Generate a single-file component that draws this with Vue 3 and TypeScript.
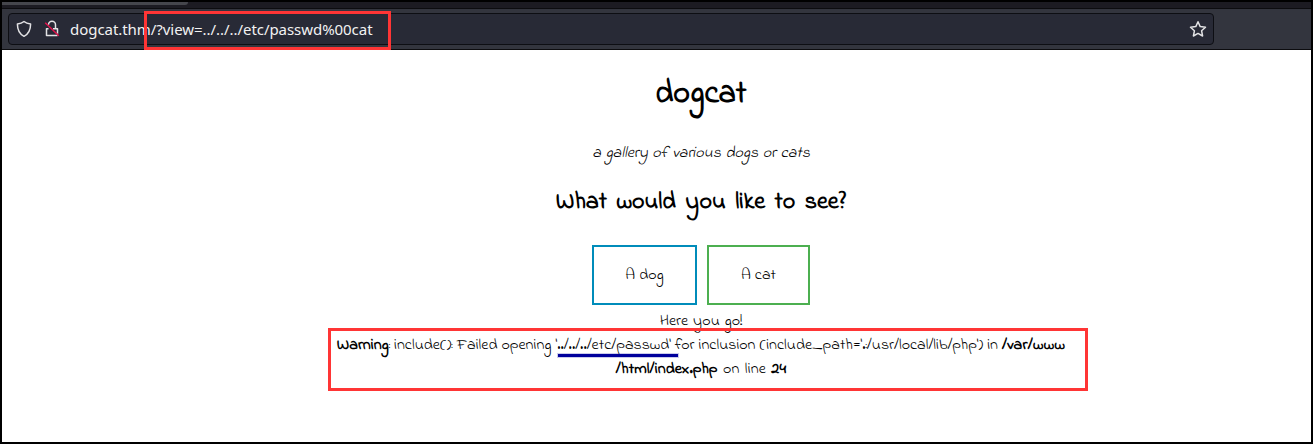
<script setup lang="ts">
interface Choice { label: string; kind: 'dog' | 'cat' }
const choices: Choice[] = [
  { label: 'A dog', kind: 'dog' },
  { label: 'A cat', kind: 'cat' },
]
</script>

<template>
  <div class="window">
    <div class="tabs"><div class="active-tab"></div></div>
    <header class="toolbar">
      <div class="urlbar">
        <svg class="shield" width="16" height="18" viewBox="0 0 16 18">
          <path d="M8 1.500C6.200 3 3.800 3.700 1.400 4c0 5.200 1.400 9.700 6.600 12.300C13.200 13.700 14.600 9.200 14.600 4 12.200 3.700 9.800 3 8 1.500Z" />
        </svg>
        <svg class="lock" width="16" height="18" viewBox="0 0 16 18">
          <path d="M4.500 4.800a3.500 3.500 0 0 1 7 0V8.500M4.500 8.800H2.500v6.700h11M9 8.800h4.500v5" />
          <path class="slash" d="M1.200 2.800 14.800 15.800" />
        </svg>
        <span class="host">dogcat.thm</span><span class="path">/?view=../../../etc/passwd%00cat</span>
        <svg class="star" width="18" height="18" viewBox="0 0 18 18">
          <path d="m9 1.700 2.200 4.900 5.300.6-3.900 3.600 1 5.200L9 13.400 4.400 16l1-5.200L1.500 7.200l5.300-.6Z" />
        </svg>
      </div>
    </header>
    <main class="page">
      <h1>dogcat</h1>
      <p class="tagline"><i>a gallery of various dogs or cats</i></p>
      <h2>What would you like to see?</h2>
      <div class="choices">
        <a v-for="c in choices" :key="c.kind" :class="['choice', c.kind]">{{ c.label }}</a>
      </div>
      <p class="go">Here you go!</p>
      <p class="warning"><b>Warning</b>: include(): Failed opening '../../../etc/passwd' for inclusion (include_path='.:/usr/local/lib/php') in <b>/var/www</b></p>
      <p class="source"><b>/html/index.php</b> on line <b>24</b></p>
    </main>
    <div class="mark url-mark"></div>
    <div class="mark warning-mark"></div>
    <div class="underline"></div>
  </div>
</template>

<style scoped>
.window {
  position: relative;
  box-sizing: border-box;
  width: 1313px;
  height: 444px;
  border: 2px solid #000;
  background: #fff;
  overflow: hidden;
}
.tabs { height: 7px; background: #1c1b22; border-bottom: 1px solid #0c0c0f; box-sizing: border-box; }
.active-tab { width: 186px; height: 3px; background: #45464c; border-bottom-right-radius: 3px; }
.toolbar {
  box-sizing: border-box;
  height: 41px;
  padding: 4px 0 0 6px;
  background: #33353e;
  border-bottom: 1px solid #0c0c0f;
}
.urlbar {
  display: flex;
  align-items: center;
  box-sizing: border-box;
  width: 1206px;
  height: 32px;
  padding: 0 6px 0 7px;
  border: 1px solid #0d0e13;
  border-radius: 4px;
  background: #282a36;
  color: #f2f2f2;
  font: 15px/30px "Noto Sans", sans-serif;
  letter-spacing: -0.05px;
  white-space: pre;
}
.urlbar svg { flex: none; fill: none; stroke: #e2e2e4; stroke-width: 1.5; stroke-linejoin: round; }
.lock { margin-left: 12px; }
.lock .slash { stroke: #e3124b; }
.host { margin-left: 10px; }
.star { margin-left: auto; }
.page {
  width: 1398px;
  color: #000;
  font: 16px/24px "Indie Flower", Lato, sans-serif;
  text-align: center;
  white-space: pre;
}
h1, h2, p { margin: 0; }
h1 { height: 48px; padding-top: 21px; font-size: 32px; line-height: 48px; }
.tagline { padding-top: 22px; word-spacing: 0.6px; }
h2 { padding-top: 20px; font-size: 24px; line-height: 36px; word-spacing: 3.7px; }
.choices { display: flex; justify-content: center; gap: 10px; padding-top: 24px; }
.choice { box-sizing: border-box; height: 60px; border: 2px solid; line-height: 56px; }
.dog { width: 105px; border-color: #008cba; }
.cat { width: 103px; border-color: #4caf50; }
.go { padding-top: 4px; word-spacing: 0.7px; }
.warning b:last-child { letter-spacing: 0.25px; }
.source { word-spacing: 1.2px; letter-spacing: 0.13px; }
.mark { position: absolute; box-sizing: border-box; border: 3px solid #ff3535; }
.url-mark { left: 142px; top: 9px; width: 247px; height: 39px; }
.warning-mark { left: 326px; top: 326px; width: 760px; height: 63px; }
.underline { position: absolute; left: 556px; top: 352px; width: 120px; height: 3px; background: #00009c; box-shadow: 0 0 0 1px rgba(0, 0, 156, 0.2); }
</style>

<style>
html, body { overflow: hidden; }
</style>
